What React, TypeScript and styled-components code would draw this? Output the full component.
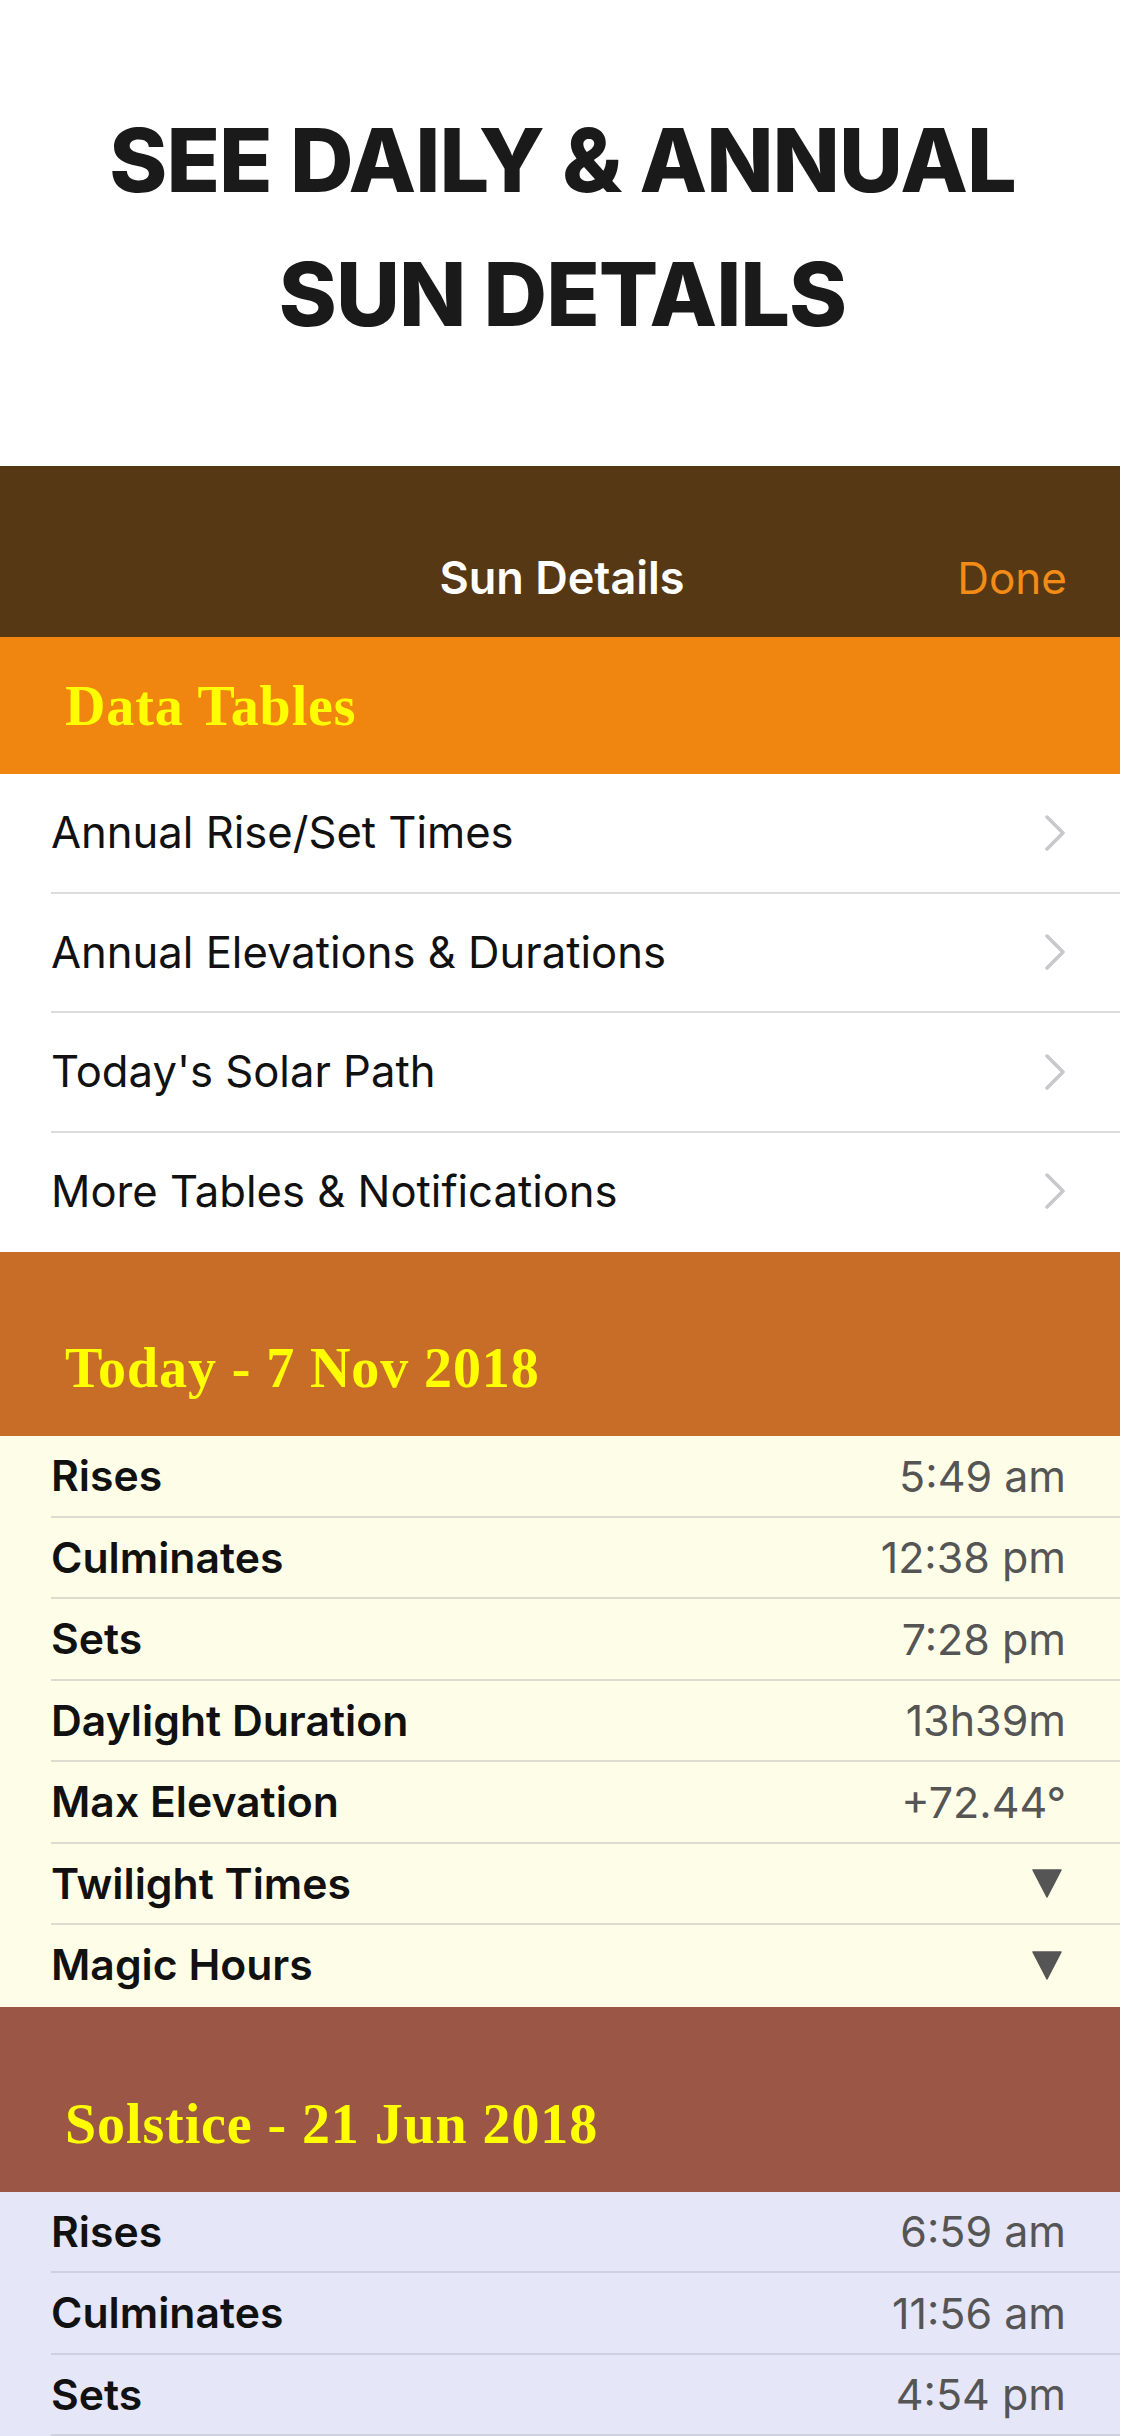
import React from "react";
import styled, { createGlobalStyle } from "styled-components";

const Global = createGlobalStyle`
  html, body { margin: 0; padding: 0; background: #ffffff; }
  body { width: 1125px; overflow-x: hidden; }
  * { box-sizing: border-box; }
`;

const Page = styled.div`
  width: 1125px;
  background: #ffffff;
  font-family: Inter, "Noto Sans", sans-serif;
`;

const Hero = styled.header`
  height: 466px;
  display: flex;
  flex-direction: column;
  align-items: center;
  padding-top: 93px;
`;

const HeroLine = styled.h1`
  margin: 0;
  font-family: Inter, "Liberation Sans", sans-serif;
  font-weight: 800;
  font-size: 88px;
  line-height: 134px;
  letter-spacing: -1px;
  color: #1a1a1a;
  white-space: nowrap;
`;

const Panel = styled.main`
  width: 1120px;
  overflow: hidden;
`;

const NavBar = styled.nav`
  height: 171px;
  background: #573814;
  display: grid;
  grid-template-columns: 1fr auto 1fr;
  align-items: center;
  padding: 90px 53px 37px 57px;
  line-height: 44px;
`;

const NavTitle = styled.div`
  grid-column: 2;
  color: #ffffff;
  font-weight: 600;
  font-size: 45px;
`;

const NavAction = styled.div`
  grid-column: 3;
  justify-self: end;
  color: #f28c16;
  font-size: 44px;
  font-weight: 400;
`;

const SectionHeader = styled.div<{ $bg: string; $h: number }>`
  height: ${(p) => p.$h}px;
  background: ${(p) => p.$bg};
  display: flex;
  align-items: flex-end;
  padding: 0 0 38px 65px;
`;

const SectionTitle = styled.h2`
  margin: 0;
  font-family: "Liberation Serif", "DejaVu Serif", serif;
  font-weight: 700;
  font-size: 56px;
  line-height: 60px;
  letter-spacing: 0.9px;
  color: #ffff00;
`;

const List = styled.section<{ $bg: string }>`
  background: ${(p) => p.$bg};
`;

const Row = styled.div<{ $h: number; $line: string; $lastLine?: boolean }>`
  height: ${(p) => p.$h}px;
  margin-left: 51px;
  padding-right: 54px;
  display: flex;
  align-items: center;
  justify-content: space-between;
  border-bottom: 2px solid ${(p) => p.$line};
  &:last-child { border-bottom-color: ${(p) => (p.$lastLine ? p.$line : "transparent")}; }
`;

const NavLabel = styled.span`
  font-size: 43.6px;
  font-weight: 400;
  color: #111111;
`;

const DataLabel = styled.span`
  font-size: 42.7px;
  font-weight: 600;
  color: #111111;
`;

const DataValue = styled.span`
  font-size: 43px;
  font-weight: 400;
  color: #555555;
`;

const Chevron = () => (
  <svg width="22" height="36" viewBox="0 0 22 36">
    <path d="M3 2 L19 18 L3 34" fill="none" stroke="#c7c7cc" strokeWidth="3.5" strokeLinecap="round" strokeLinejoin="round" />
  </svg>
);

const Caret = () => (
  <svg width="30" height="30" viewBox="0 0 30 30" style={{ marginRight: 4 }}>
    <path d="M1 2 H29 L15 29 Z" fill="#555555" stroke="#555555" strokeWidth="1.5" strokeLinejoin="round" />
  </svg>
);

const navItems = [
  "Annual Rise/Set Times",
  "Annual Elevations & Durations",
  "Today's Solar Path",
  "More Tables & Notifications",
];

type DataItem = { label: string; value?: string };

const today: DataItem[] = [
  { label: "Rises", value: "5:49 am" },
  { label: "Culminates", value: "12:38 pm" },
  { label: "Sets", value: "7:28 pm" },
  { label: "Daylight Duration", value: "13h39m" },
  { label: "Max Elevation", value: "+72.44°" },
  { label: "Twilight Times" },
  { label: "Magic Hours" },
];

const solstice: DataItem[] = [
  { label: "Rises", value: "6:59 am" },
  { label: "Culminates", value: "11:56 am" },
  { label: "Sets", value: "4:54 pm" },
];

const DataList = ({
  items,
  bg,
  line,
  continues,
}: {
  items: DataItem[];
  bg: string;
  line: string;
  continues?: boolean;
}) => (
  <List $bg={bg}>
    {items.map((it) => (
      <Row key={it.label} $h={81.5} $line={line} $lastLine={continues}>
        <DataLabel>{it.label}</DataLabel>
        {it.value ? <DataValue>{it.value}</DataValue> : <Caret />}
      </Row>
    ))}
  </List>
);

export default function App() {
  return (
    <Page>
      <Global />
      <Hero>
        <HeroLine>SEE DAILY &amp; ANNUAL</HeroLine>
        <HeroLine>SUN DETAILS</HeroLine>
      </Hero>
      <Panel>
        <NavBar>
          <NavTitle>Sun Details</NavTitle>
          <NavAction>Done</NavAction>
        </NavBar>
        <SectionHeader $bg="#f0860f" $h={137}>
          <SectionTitle>Data Tables</SectionTitle>
        </SectionHeader>
        <List $bg="#ffffff">
          {navItems.map((t) => (
            <Row key={t} $h={119.5} $line="#dcdcdc">
              <NavLabel>{t}</NavLabel>
              <Chevron />
            </Row>
          ))}
        </List>
        <SectionHeader $bg="#c86d28" $h={184}>
          <SectionTitle>Today - 7 Nov 2018</SectionTitle>
        </SectionHeader>
        <DataList items={today} bg="#fefee8" line="#dddcd0" />
        <SectionHeader $bg="#9c5645" $h={185}>
          <SectionTitle>Solstice - 21 Jun 2018</SectionTitle>
        </SectionHeader>
        <DataList items={solstice} bg="#e5e6f8" line="#cfd0e0" continues />
      </Panel>
    </Page>
  );
}
